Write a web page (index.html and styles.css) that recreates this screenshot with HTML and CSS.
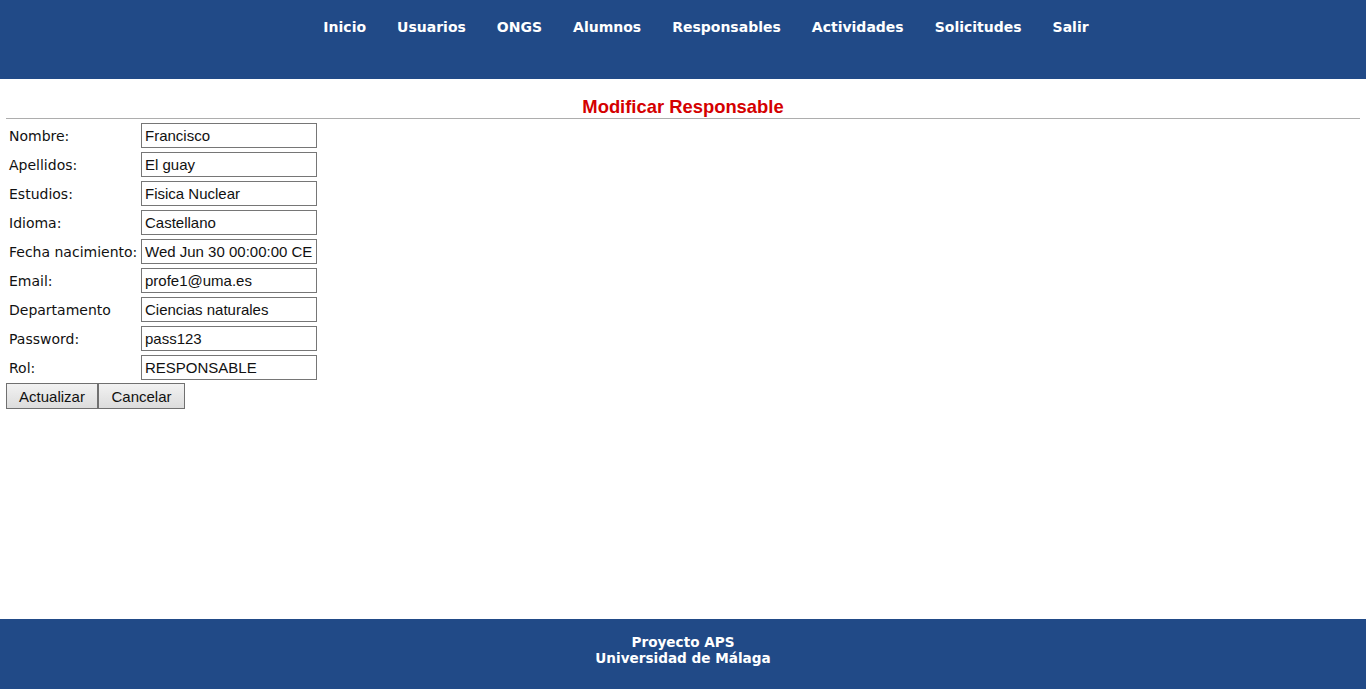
FILE: index.html
```
<!DOCTYPE html>
<html lang="es">
<head>
<meta charset="utf-8">
<title>Modificar Responsable</title>
<link rel="stylesheet" href="styles.css">
</head>
<body>
<header class="topbar">
  <ul class="nav">
    <li><a href="#">Inicio</a></li>
    <li><a href="#">Usuarios</a></li>
    <li><a href="#">ONGS</a></li>
    <li><a href="#">Alumnos</a></li>
    <li><a href="#">Responsables</a></li>
    <li><a href="#">Actividades</a></li>
    <li><a href="#">Solicitudes</a></li>
    <li><a href="#">Salir</a></li>
  </ul>
</header>
<main class="content">
  <h2 class="title">Modificar Responsable</h2>
  <hr class="rule">
  <form class="form">
    <div class="grid">
      <label class="lbl">Nombre:</label><input class="field" value="Francisco">
      <label class="lbl">Apellidos:</label><input class="field" value="El guay">
      <label class="lbl">Estudios:</label><input class="field" value="Fisica Nuclear">
      <label class="lbl">Idioma:</label><input class="field" value="Castellano">
      <label class="lbl">Fecha nacimiento:</label><input class="field" value="Wed Jun 30 00:00:00 CEST 1993">
      <label class="lbl">Email:</label><input class="field" value="profe1@uma.es">
      <label class="lbl">Departamento</label><input class="field" value="Ciencias naturales">
      <label class="lbl">Password:</label><input class="field" value="pass123">
      <label class="lbl">Rol:</label><input class="field" value="RESPONSABLE">
    </div>
    <div class="buttons">
      <button type="button" class="btn btn-a">Actualizar</button><button type="button" class="btn btn-c">Cancelar</button>
    </div>
  </form>
</main>
<footer class="footer">
  <p class="foot-line">Proyecto APS</p>
  <p class="foot-line">Universidad de Málaga</p>
</footer>
</body>
</html>
```
FILE: styles.css
```
html, body {
  margin: 0;
  padding: 0;
  background: #ffffff;
}
body {
  font-family: "DejaVu Sans", Verdana, sans-serif;
  overflow: hidden;
}
.topbar {
  background: #214a87;
  height: 79px;
  box-sizing: border-box;
  padding-top: 18px;
}
.nav {
  list-style: none;
  margin: 0;
  padding: 0 0 0 46px;
  display: flex;
  justify-content: center;
  gap: 31px;
}
.nav a {
  color: #ffffff;
  text-decoration: none;
  font-family: "DejaVu Sans", Verdana, sans-serif;
  font-weight: bold;
  font-size: 14px;
  line-height: 18px;
  display: block;
}
.content {
  height: 540px;
  padding: 17px 6px 0 6px;
  box-sizing: border-box;
}
.title {
  margin: 0;
  text-align: center;
  font-family: "Liberation Sans", Arial, sans-serif;
  font-size: 18.4px;
  line-height: 21px;
  font-weight: bold;
  color: #d40000;
}
.rule {
  margin: 1px 0 0 0;
  border: 0;
  border-top: 1px solid #adadad;
  height: 0;
}
.form {
  margin: 0;
  padding: 4px 0 0 2px;
}
.grid {
  display: grid;
  grid-template-columns: 131px 176px;
  row-gap: 4px;
  align-items: center;
}
.lbl {
  font-family: "DejaVu Sans", Verdana, sans-serif;
  font-size: 14px;
  color: #111;
  padding-left: 1px;
  white-space: nowrap;
}
.field {
  margin-left: 2px;
  width: 176px;
  height: 25px;
  box-sizing: border-box;
  border: 1px solid #767676;
  padding: 0 3px;
  font-family: "Liberation Sans", Arial, sans-serif;
  font-size: 15px;
  color: #111;
  background: #fff;
  outline: none;
}
.buttons {
  display: flex;
  margin: 3px 0 0 -2px;
}
.btn {
  height: 26px;
  box-sizing: border-box;
  border: 1px solid #707070;
  background: linear-gradient(#f2f2f2, #dcdcdc);
  font-family: "Liberation Sans", Arial, sans-serif;
  font-size: 15px;
  color: #111;
  padding: 0 11px;
  margin: 0;
}
.btn-a { width: 92px; }
.btn-c { width: 87px; }
.footer {
  background: #214a87;
  height: 70px;
  box-sizing: border-box;
  padding-top: 15px;
  text-align: center;
}
.foot-line {
  margin: 0;
  color: #ffffff;
  font-family: "DejaVu Sans", Verdana, sans-serif;
  font-weight: bold;
  font-size: 13.6px;
  line-height: 16px;
}
```
